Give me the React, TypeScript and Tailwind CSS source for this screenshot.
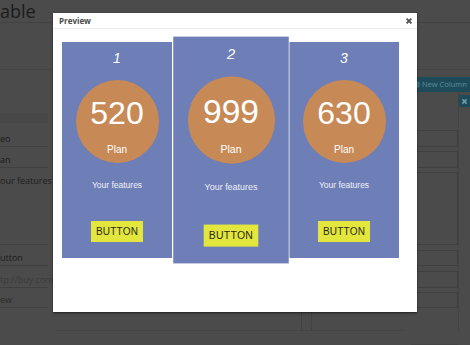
const plans = [
  { n: "1", price: "520", featured: false },
  { n: "2", price: "999", featured: true },
  { n: "3", price: "630", featured: false },
]

function PlanCard({ n, price, featured }: { n: string; price: string; featured: boolean }) {
  return (
    <div
      className={`w-[110px] h-[216px] shrink-0 bg-[#6e7eb6] flex flex-col items-center ${
        featured ? "scale-105 z-10 ring-1 ring-white/60" : ""
      }`}
      style={{ fontFamily: '"Liberation Sans", Arial, sans-serif' }}
    >
      <div className="pt-[8px] h-[24px] text-[14px] leading-[16px] italic text-white">{n}</div>
      <div className="mt-[14px] w-[83px] h-[83px] rounded-full bg-[#c78a57] flex flex-col items-center pt-[17px]">
        <div className="text-[32px] leading-[32px] text-white">{price}</div>
        <div className="mt-[15px] text-[10px] leading-[12px] text-white">Plan</div>
      </div>
      <div className="mt-[16px] text-[8.5px] leading-[12px] text-[#eef0f8]">Your features</div>
      <div className="mt-[30px] h-[21px] px-[5px] bg-[#e2e63d] flex items-center text-[10px] text-[#2b2b1a] tracking-[0.2px]">
        BUTTON
      </div>
    </div>
  )
}

function FieldRows({ texts, boxed }: { texts: string[]; boxed?: boolean }) {
  const b = boxed ? "border border-[#404040]" : "border-b border-[#3f3f3f]"
  return (
    <div className="flex flex-col">
      <div className={`h-[17px] ${b} text-[9px] leading-[17px] text-[#1c1c1c] whitespace-nowrap`}>{texts[0]}</div>
      <div className={`mt-[4px] h-[17px] ${b} text-[9px] leading-[17px] text-[#1c1c1c] whitespace-nowrap`}>{texts[1]}</div>
      <div className={`mt-[4px] h-[73px] ${b} text-[9px] leading-[17px] text-[#1c1c1c] whitespace-nowrap`}>{texts[2]}</div>
      <div className={`mt-[5px] h-[16px] ${b} text-[9px] leading-[16px] text-[#1c1c1c] whitespace-nowrap`}>{texts[3]}</div>
      <div className={`mt-[5px] h-[17px] ${b} text-[9px] leading-[17px] text-[#3a3a3a] whitespace-nowrap`}>{texts[4]}</div>
      <div className={`mt-[4px] h-[16px] ${b} text-[9px] leading-[16px] text-[#2a2a2a] whitespace-nowrap`}>{texts[5]}</div>
    </div>
  )
}

export default function App() {
  return (
    <div
      className="relative w-[470px] h-[345px] overflow-hidden bg-[#4b4b4b]"
      style={{ fontFamily: '"Open Sans", "Liberation Sans", sans-serif' }}
    >
      {/* page behind the dialog */}
      <div className="h-[23px] border-b border-[#424242] text-[18px] leading-[23px] text-[#1c1c1c]">able</div>
      <div className="h-[47px] border-b border-[#444444]" />
      <div className="flex h-[275px]">
        <div className="w-[48px] flex flex-col">
          <div className="h-[45px] border-b border-[#444444]" />
          <div className="h-[8px] bg-[#474747]" />
          <div className="mt-[7px]">
            <FieldRows texts={["eo", "an", "our features", "utton", "tp://buy.com", "ew"]} />
          </div>
        </div>
        <div className="flex-1 flex flex-col justify-end">
          <div className="h-[31px] flex border-b border-[#444444] mx-[8px]">
            <div className="w-[142px] flex items-start pl-[98px] pt-[5px]">
              <div className="w-[6px] h-[6px] rounded-full bg-[#222]" />
            </div>
            <div className="w-[104px] border-r border-[#424242]" />
            <div className="w-[10px] border-r border-[#424242]" />
            <div className="flex-1 pl-[5px] pt-[5px]">
              <div className="w-[6px] h-[6px] rounded-full border border-[#333] bg-[#444]" />
            </div>
          </div>
          <div className="h-[14px]" />
        </div>
        <div className="w-[59px] flex flex-col">
          <div className="mt-[7px] h-[15px] bg-[#1d4b5a] flex items-center pl-[2px] gap-[2px] text-[7.5px] text-[#5d8e9c] whitespace-nowrap">
            <div className="w-[7px] h-[7px] shrink-0 rounded-full bg-[#3d6d7c]" />
            New Column
          </div>
          <div className="flex flex-1">
            <div className="flex-1 pl-[2px] pt-[38px] pb-[22px] border-b border-[#444444]">
              <FieldRows texts={["", "", "", "", "", ""]} boxed />
            </div>
            <div className="w-[12px] flex flex-col border-l border-[#434343] mb-[14px]">
              <div className="mt-[3px] h-[12px] bg-[#1d4b5a] flex items-center justify-center">
                <svg width="7" height="7" viewBox="0 0 10 10">
                  <path d="M2 2 L8 8 M8 2 L2 8" stroke="#6f98a4" strokeWidth="2.4" />
                </svg>
              </div>
            </div>
          </div>
        </div>
      </div>

      {/* dialog */}
      <div className="absolute left-[53px] top-[13px] w-[364px] h-[299px] bg-white shadow-[0_1px_2px_rgba(0,0,0,0.6)]">
        <div className="h-[16px] border-b border-[#ececec] px-[6px] flex items-center justify-between">
          <span className="text-[8px] font-bold text-[#4a4a4a]">Preview</span>
          <svg width="8" height="8" viewBox="0 0 10 10" className="mr-[-2px]">
            <path d="M2 2 L8 8 M8 2 L2 8" stroke="#555" strokeWidth="2.4" />
          </svg>
        </div>
        <div className="pt-[13px] pl-[9px] flex gap-[3.5px]">
          {plans.map((p) => (
            <PlanCard key={p.n} n={p.n} price={p.price} featured={p.featured} />
          ))}
        </div>
      </div>
    </div>
  )
}
